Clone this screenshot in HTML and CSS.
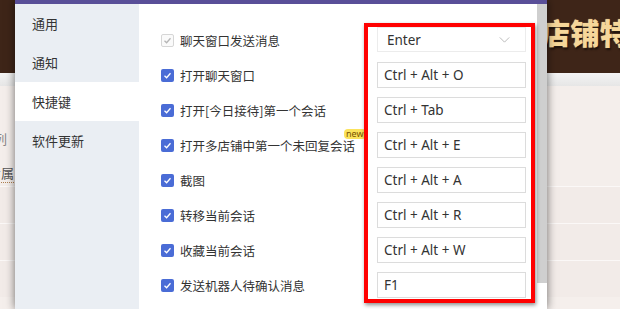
FILE: index.html
```html
<!DOCTYPE html>
<html>
<head>
    <meta charset="UTF-8">
    <title>设置 - 快捷键</title>
    <link rel="stylesheet" href="styles.css">
</head>
<body>
    <div class="bg">
        <div class="bg-head"><span class="bg-title">专属店铺特权</span></div>
        <div class="bg-band"></div>
        <div class="bg-body">
            <div class="bg-link first">订单列</div>
            <div class="bg-link dotted">专属</div>
            <div class="bg-rows">
                <div class="bg-row"></div>
                <div class="bg-row"></div>
                <div class="bg-row"></div>
            </div>
        </div>
    </div>

    <div class="dialog">
        <div class="nav">
            <div class="nav-item">通用</div>
            <div class="nav-item">通知</div>
            <div class="nav-item active">快捷键</div>
            <div class="nav-item">软件更新</div>
        </div>

        <div class="main">
            <div class="row">
                <span class="check disabled"><svg viewBox="0 0 13 13"><polyline points="3.5,6.8 5.6,8.8 9.5,4.3"/></svg></span>
                <span class="label">聊天窗口发送消息</span>
                <div class="key select">Enter<svg class="chevron" viewBox="0 0 12 7"><polyline points="0.5,0.5 6,6 11.5,0.5"/></svg></div>
            </div>
            <div class="row">
                <span class="check"><svg viewBox="0 0 13 13"><polyline points="3.5,6.8 5.6,8.8 9.5,4.3"/></svg></span>
                <span class="label">打开聊天窗口</span>
                <div class="key">Ctrl + Alt + O</div>
            </div>
            <div class="row">
                <span class="check"><svg viewBox="0 0 13 13"><polyline points="3.5,6.8 5.6,8.8 9.5,4.3"/></svg></span>
                <span class="label">打开[今日接待]第一个会话</span>
                <div class="key">Ctrl + Tab</div>
            </div>
            <div class="row">
                <span class="check"><svg viewBox="0 0 13 13"><polyline points="3.5,6.8 5.6,8.8 9.5,4.3"/></svg></span>
                <span class="label"><span class="label-text">打开多店铺中第一个未回复会话<span class="badge">new</span></span></span>
                <div class="key">Ctrl + Alt + E</div>
            </div>
            <div class="row">
                <span class="check"><svg viewBox="0 0 13 13"><polyline points="3.5,6.8 5.6,8.8 9.5,4.3"/></svg></span>
                <span class="label">截图</span>
                <div class="key">Ctrl + Alt + A</div>
            </div>
            <div class="row">
                <span class="check"><svg viewBox="0 0 13 13"><polyline points="3.5,6.8 5.6,8.8 9.5,4.3"/></svg></span>
                <span class="label">转移当前会话</span>
                <div class="key">Ctrl + Alt + R</div>
            </div>
            <div class="row">
                <span class="check"><svg viewBox="0 0 13 13"><polyline points="3.5,6.8 5.6,8.8 9.5,4.3"/></svg></span>
                <span class="label">收藏当前会话</span>
                <div class="key">Ctrl + Alt + W</div>
            </div>
            <div class="row">
                <span class="check"><svg viewBox="0 0 13 13"><polyline points="3.5,6.8 5.6,8.8 9.5,4.3"/></svg></span>
                <span class="label">发送机器人待确认消息</span>
                <div class="key">F1</div>
            </div>

            <!-- annotation box round the key column -->
            <div class="highlight"></div>
        </div>

        <div class="scrollbar"><div class="thumb"></div></div>
    </div>
</body>
</html>
```

FILE: styles.css
```css
body {
    margin: 0;
    width: 620px;
    height: 309px;
    overflow: hidden;
    position: relative;
    font-family: "Noto Sans CJK SC", "Noto Sans", sans-serif;
    background-color: #f5efec;
}

/* page behind the dialog */
.bg-head {
    height: 73px;
    background-color: #3e2518;
    padding-left: 482px;
    white-space: nowrap;
    overflow: hidden;
}

.bg-title {
    display: inline-block;
    margin-top: 14px;
    font-size: 29px;
    line-height: 36px;
    font-weight: 900;
    letter-spacing: 0.5px;
    color: #f6d79a;
    text-shadow: 1px 2px 2px rgba(0, 0, 0, 0.6), 0 0 1px #f6d79a;
}

.bg-band {
    height: 13px;
    background: linear-gradient(#f4f4f4, #e6e6e6);
}

.bg-body {
    background-color: #f4eeeb;
    padding-top: 43px;
}

.bg-link {
    height: 20px;
    line-height: 20px;
    font-size: 13px;
    color: #888;
    white-space: nowrap;
}

.bg-link.first {
    margin-left: -32px;
}

.bg-link.dotted {
    margin-left: -12px;
    margin-top: 14px;
    color: #555;
}

.bg-link.dotted::after {
    content: "";
    display: block;
    width: 30px;
    border-bottom: 1px dotted #b08050;
    margin-top: -1px;
}

.bg-rows {
    margin-top: 3px;
}

.bg-row {
    height: 36px;
    border-top: 1px solid #fbf8f7;
    background-color: #f2ebe8;
}

/* dialog */
.dialog {
    position: absolute;
    left: 15px;
    top: 0;
    width: 532px;
    height: 305px;
    display: flex;
    background-color: #fff;
    border-top: 4px solid #594f98;
    box-shadow: 0 0 9px rgba(0, 0, 0, 0.55);
}

.nav {
    width: 124px;
    background-color: #eaeef3;
}

.nav-item {
    height: 39px;
    line-height: 39px;
    padding-left: 17px;
    font-size: 13px;
    color: #333;
}

.nav-item.active {
    background-color: #fff;
}

.main {
    flex: 1;
    position: relative;
    padding: 23px 0 0 22px;
}

.row {
    display: flex;
    align-items: center;
    height: 26px;
    margin-bottom: 9px;
}

.check {
    width: 13px;
    height: 13px;
    box-sizing: border-box;
    border-radius: 2px;
    background-color: #4a6cd6;
    margin-right: 6px;
    flex-shrink: 0;
}

.check svg {
    display: block;
    width: 13px;
    height: 13px;
    fill: none;
    stroke: #fff;
    stroke-width: 1.3;
}

.check.disabled {
    background-color: #fafafa;
    border: 1px solid #d6d6d6;
}

.check.disabled svg {
    margin: -1px;
    stroke: #b5b5b5;
}

.label {
    width: 197px;
    font-size: 12.5px;
    color: #333;
    white-space: nowrap;
}

.label-text {
    position: relative;
}

.badge {
    position: absolute;
    left: calc(100% - 11px);
    top: -7px;
    height: 10px;
    line-height: 10px;
    padding: 0 2px;
    border-radius: 4px;
    background-color: #fbe35c;
    color: #7a5200;
    font-family: "Noto Sans", sans-serif;
    font-size: 9px;
}

.key {
    width: 149px;
    height: 26px;
    box-sizing: border-box;
    border: 1px solid #dcdcdc;
    padding-left: 6px;
    line-height: 24px;
    font-family: "Noto Sans", sans-serif;
    font-size: 13.5px;
    color: #333;
}

.key.select {
    position: relative;
    height: 25px;
    border-color: #ececec;
    padding-left: 9px;
    margin-top: -1px;
}

.chevron {
    position: absolute;
    right: 15px;
    top: 9px;
    width: 11px;
    height: 6px;
    fill: none;
    stroke: #b0b0b0;
    stroke-width: 1;
}

.highlight {
    position: absolute;
    left: 225px;
    top: 19px;
    width: 171px;
    height: 280px;
    box-sizing: border-box;
    border: 4px solid #ff0000;
    box-shadow: 1px 2px 4px rgba(0, 0, 0, 0.45);
}

.scrollbar {
    width: 10px;
    background-color: #fff;
}

.thumb {
    height: 279px;
    background-color: #cfcfcf;
}
```
